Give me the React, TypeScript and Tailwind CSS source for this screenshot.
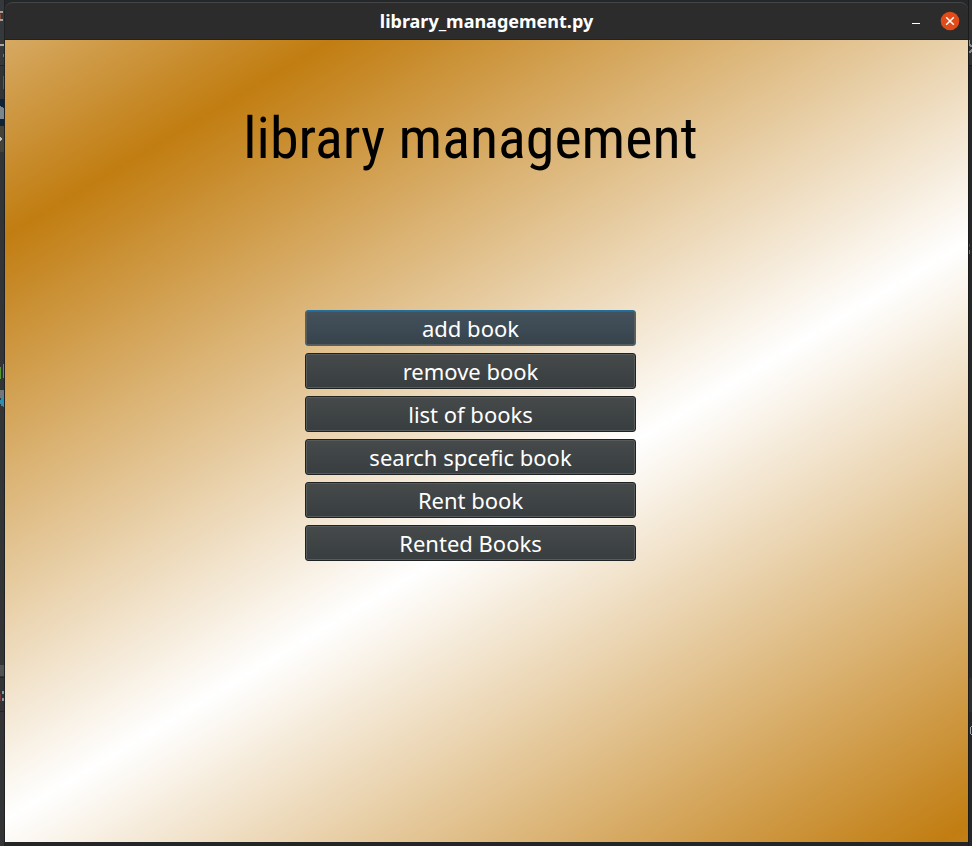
import React from "react";

const actions = [
  "add book",
  "remove book",
  "list of books",
  "search spcefic book",
  "Rent book",
  "Rented Books",
];

function LeftEdge() {
  return (
    <svg aria-hidden="true" className="h-full w-full" shapeRendering="crispEdges">
      <rect width="5" height="100%" fill="#323436" />
      <rect width="5" height="65" fill="#35393c" />
      <path d="M0 12H3M0 20H3" stroke="#a8a09a" strokeWidth="2" />
      <path d="M0 14V19" stroke="#8a4a35" strokeWidth="2" />
      <rect y="44" width="4" height="2" fill="#b0a89a" />
      <rect x="3" y="54" width="1" height="3" fill="#5b7f99" />
      <rect y="65" width="5" height="1" fill="#222325" />
      <rect x="3" y="76" width="1" height="13" fill="#4d5f73" />
      <rect y="99" width="5" height="27" fill="#0d2438" />
      <path d="M0 106Q4 107 4 110V119H0Z" fill="#7b878f" />
      <rect y="126" width="5" height="26" fill="#454238" />
      <path d="M0 137L2 139L0 141Z" fill="#c4c4c4" />
      <rect y="367" width="1" height="12" fill="#549a32" />
      <rect x="3" y="364" width="1" height="14" fill="#777b7e" />
      <rect y="390" width="4" height="8" fill="#72777b" />
      <circle cx="5" cy="402" r="5" fill="#2c8db3" />
      <rect y="665" width="4" height="11" fill="#505254" />
      <rect y="677" width="5" height="1" fill="#222325" />
      <rect y="694" width="1" height="7" fill="#74393a" />
      <rect x="2" y="691" width="2" height="3" fill="#7d9ca8" />
      <rect x="2" y="698" width="2" height="3" fill="#7d9ca8" />
      <rect y="711" width="5" height="1" fill="#222325" />
      <rect x="4" width="1" height="100%" fill="#202122" />
    </svg>
  );
}

function RightEdge() {
  return (
    <svg aria-hidden="true" className="h-full w-full" shapeRendering="crispEdges">
      <rect width="4" height="100%" fill="#252627" />
      <rect width="4" height="65" fill="#2e3133" />
      <path d="M1 40V44L4 47M1 53L4 50" fill="none" stroke="#8c8c8c" strokeWidth="2" />
      <rect y="65" width="4" height="1" fill="#1c1c1c" />
      <rect x="1" y="244" width="1" height="3" fill="#6b3d25" />
      <rect x="1" y="250" width="1" height="4" fill="#8a7042" />
      <rect y="678" width="4" height="34" fill="#2d2e2f" />
      <path d="M4 726L2 728V733L4 735" fill="none" stroke="#9aa3ad" strokeWidth="1" />
      <rect width="1" height="100%" fill="#1b1b1b" />
    </svg>
  );
}

function TitleBar() {
  return (
    <header className="grid h-[38px] shrink-0 grid-cols-[1fr_auto_1fr] items-center rounded-t-lg border-t border-b border-t-[#454545] border-b-[#222222] bg-[#2c2c2c]">
      <span />
      <h1 className="font-['Noto_Sans',sans-serif] text-[18px] leading-6 font-bold text-white">
        library_management.py
      </h1>
      <div className="flex items-center justify-end gap-4 pr-2">
        <button type="button" aria-label="Minimize" className="flex h-5 w-5 items-center justify-center">
          <svg className="h-5 w-5" viewBox="0 0 20 20" shapeRendering="crispEdges">
            <rect x="8" y="12" width="8" height="1" fill="#ffffff" />
          </svg>
        </button>
        <button type="button" aria-label="Close" className="flex h-5 w-5 items-center justify-center">
          <svg className="h-5 w-5" viewBox="0 0 20 20">
            <circle cx="10" cy="10" r="9.3" fill="#e04b1a" />
            <path d="M6.2 6.2L13.8 13.8M13.8 6.2L6.2 13.8" stroke="#ffffff" strokeWidth="1.5" />
          </svg>
        </button>
      </div>
    </header>
  );
}

export default function App() {
  return (
    <div className="grid min-h-screen grid-cols-[5px_1fr_4px] bg-[#252627]">
      <LeftEdge />
      <div className="flex flex-col border-t-2 border-b-4 border-t-[#25282a] border-b-[#242526] bg-[#25282a]">
        <TitleBar />
        <main className="flex flex-1 flex-col items-center bg-[linear-gradient(149deg,#d6a962_0%,#c17d11_14.2%,#ffffff_56.5%,#c17d11_98.8%,#c38018_100%)] pt-[58px] pr-8">
          <h2 className="font-['Roboto_Condensed','Open_Sans_Condensed',sans-serif] text-[58px] leading-[80px] font-normal whitespace-nowrap text-black">
            library management
          </h2>
          <nav className="mt-[132px] flex w-full max-w-[331px] flex-col gap-[7px]">
            {actions.map((label) => (
              <button
                key={label}
                type="button"
                className="h-9 rounded-[3px] border border-[#1e2223] bg-linear-to-b from-[#464a4b] to-[#383d3f] font-['Noto_Sans',sans-serif] text-[22px] leading-8 text-white inset-ring inset-ring-[#565b5d] first:border-[#24719f] first:from-[#44525c] first:to-[#37434b]"
              >
                {label}
              </button>
            ))}
          </nav>
        </main>
      </div>
      <RightEdge />
    </div>
  );
}
